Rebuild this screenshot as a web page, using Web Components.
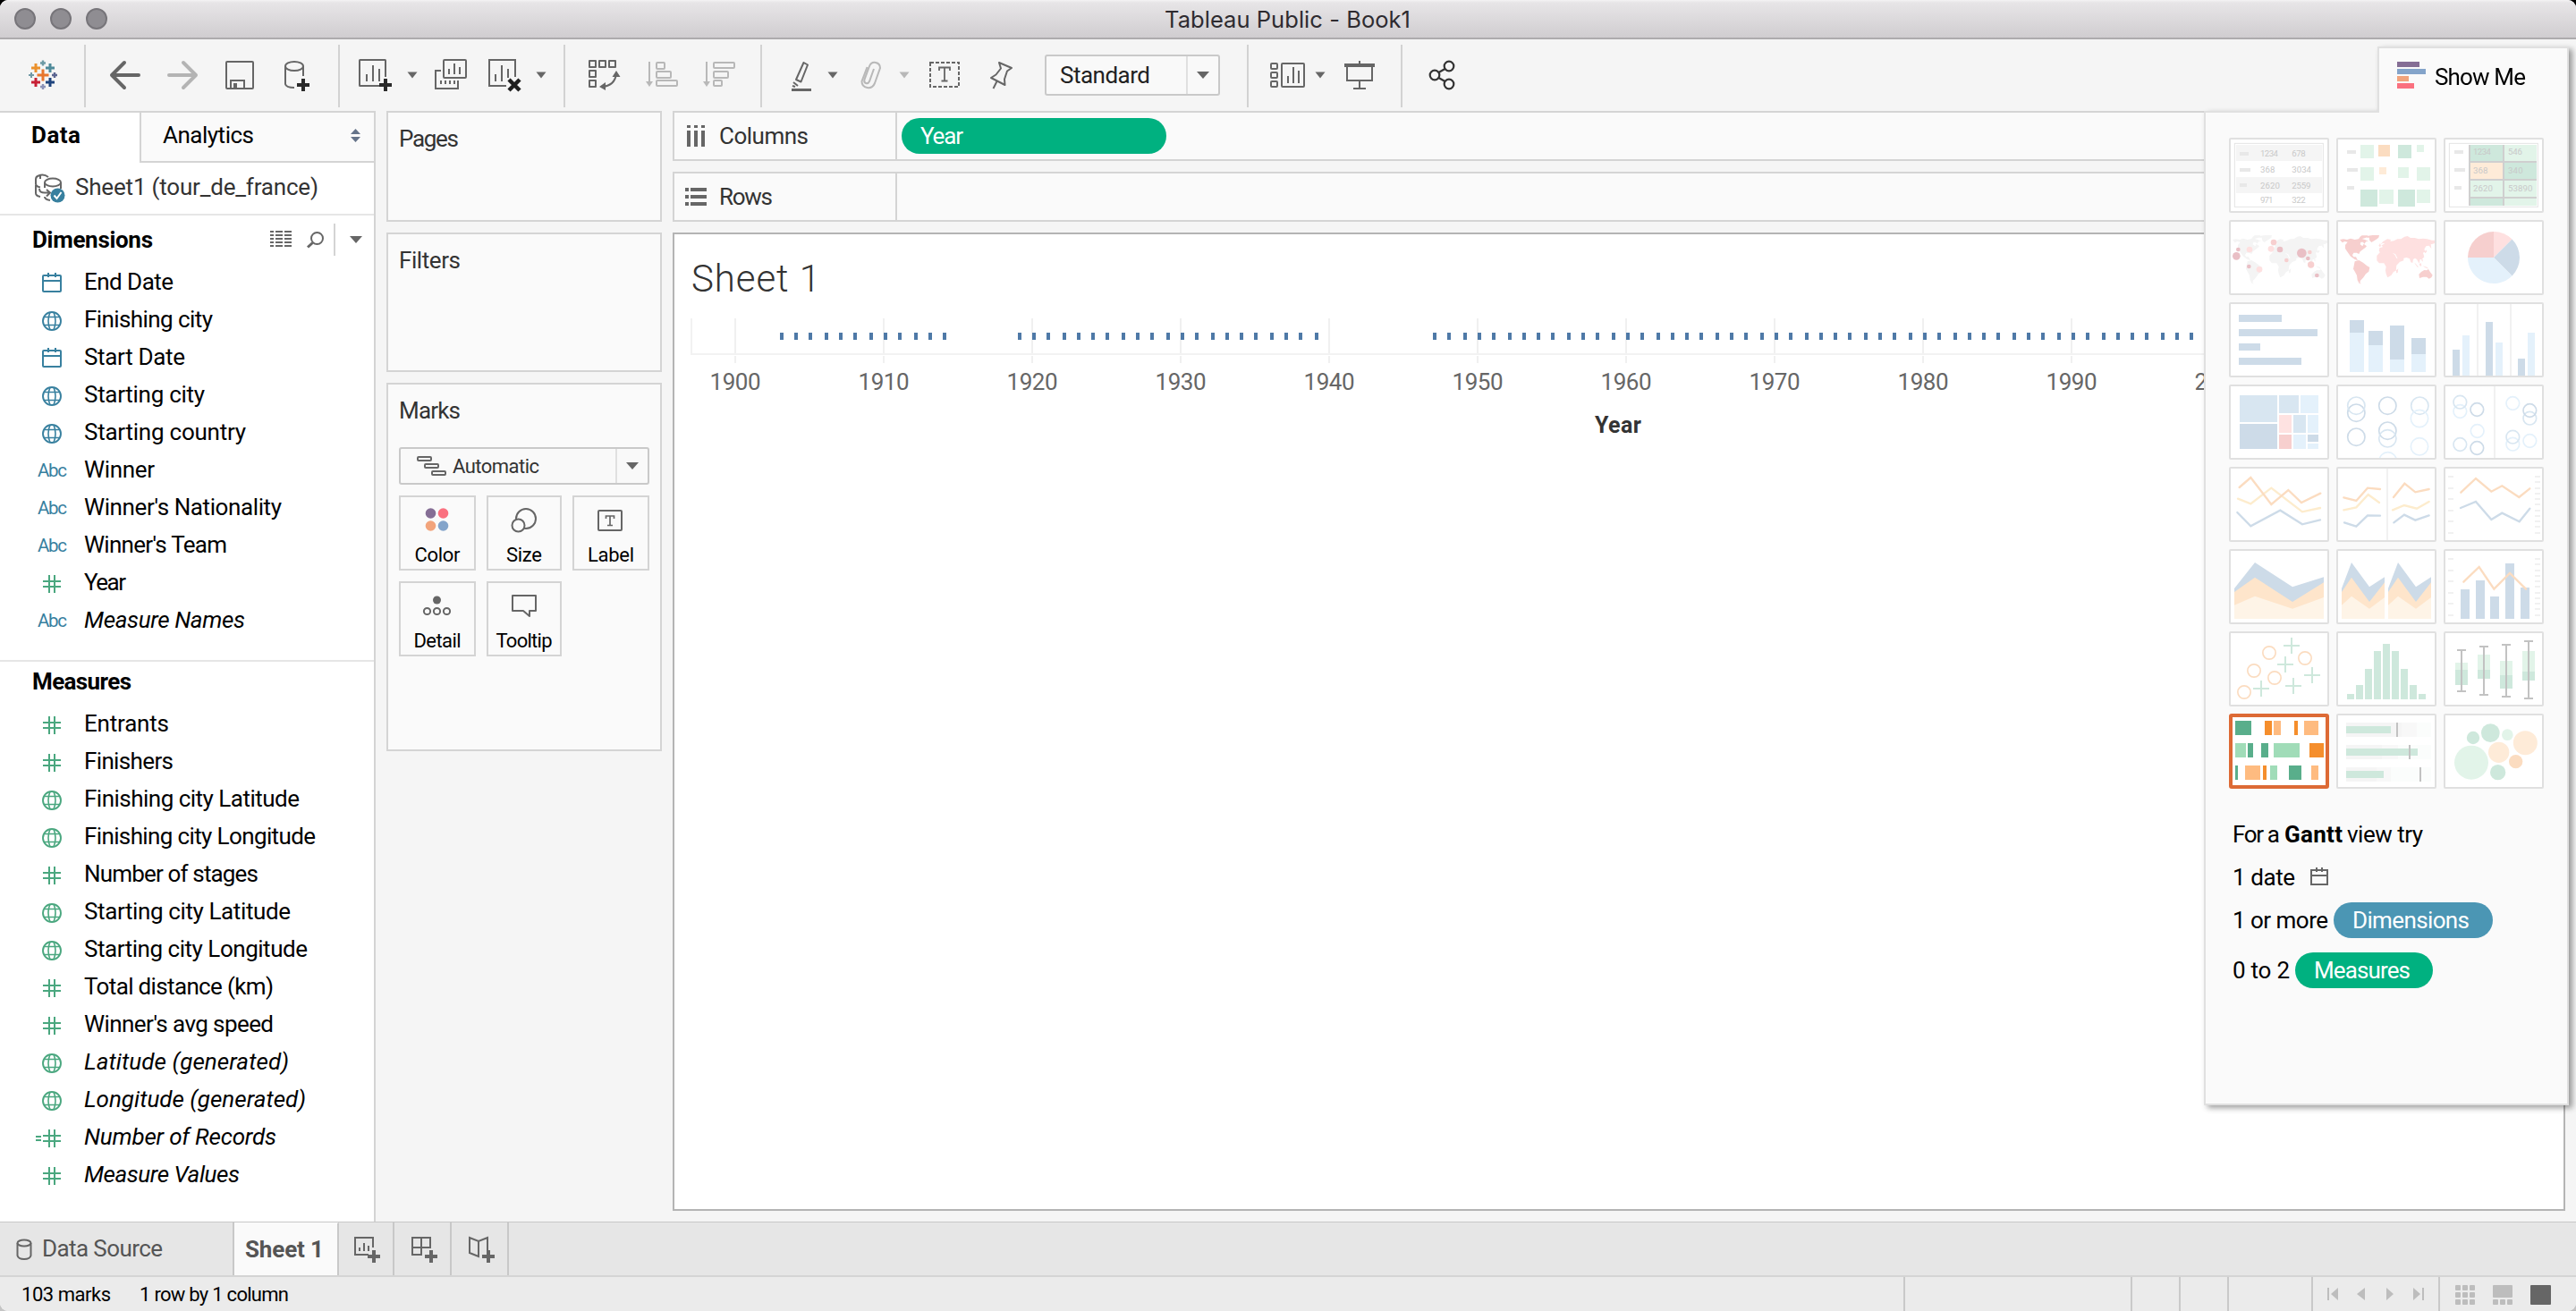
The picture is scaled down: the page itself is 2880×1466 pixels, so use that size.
<!DOCTYPE html>
<html lang="en">
<head>
<meta charset="utf-8">
<title>Tableau Public - Book1</title>
<style>
html{background:linear-gradient(#000 50%,#c4c4c4 50%)}
body{margin:0;width:2880px;height:1466px;overflow:hidden;font-family:Roboto,"Liberation Sans",sans-serif;font-size:26px;color:#000}
</style>
</head>
<body>
<workbook-window></workbook-window>
<script>
/* Inline icon: the viewBox uses the same pixel grid as the box it fills. */
const icon = (x, y, w, h, body, extra = '') =>
  `<svg width="${w}" height="${h}" viewBox="${x} ${y} ${w} ${h}" fill="none" stroke="#666" stroke-width="2" ${extra}>${body}</svg>`;
const define = (name, css, html, after) => customElements.define(name, class extends HTMLElement {
  connectedCallback() {
    if (this.shadowRoot) return;
    const root = this.attachShadow({ mode: 'open' });
    root.innerHTML = `<style>:host{display:block;box-sizing:border-box}*{box-sizing:border-box}svg{display:block;flex:none}${css}</style>` +
      (typeof html === 'function' ? html(this) : html);
    if (after) after(this, root);
  }
});

/* Text whose tracking is adjusted so that it occupies the given width. */
define('fit-text', ':host{display:inline-block;white-space:pre;flex:none}', '<span><slot></slot></span>', (el, root) => {
  const w = +el.getAttribute('w');
  if (!w) return;
  const span = root.querySelector('span');
  const n = el.textContent.length;
  const pad = 3;
  const nat = span.getBoundingClientRect().width;
  span.style.letterSpacing = ((w + pad - nat) / (n - 1)).toFixed(3) + 'px';
  el.style.width = (w + pad) + 'px';
});

define('title-bar', `
:host{height:44px;background:linear-gradient(#f4f3f4 0,#e7e5e7 3px,#d0cdd0 42px);border-bottom:2px solid #adabad;display:flex;align-items:center;flex:none;font:25.500px Inter,sans-serif;color:#2e2b30}
i{width:24px;height:24px;border-radius:50%;background:#8f8d92;border:2px solid #77757a;margin-left:16px;flex:none}
fit-text{margin-left:1182px;line-height:44px;padding-top:2px}`,
`<i></i><i></i><i></i><fit-text w="272">Tableau Public - Book1</fit-text>`);

const plus = (x, y, r, c, s = 2.6) => `<path stroke="${c}" stroke-width="${s}" d="M${x - r} ${y}h${2 * r}M${x} ${y - r}v${2 * r}"/>`;
const caret = (c = '#666') => `<svg width="12" height="10" viewBox="0 0 12 10"><path fill="${c}" d="M.5 1.500h11L6 8.500z"/></svg>`;
const T = {
  logo: [32, 32, plus(48, 84, 6.500, '#e8762c', 3) + plus(48, 70.500, 3, '#6d9aa5', 2.400) + plus(40, 76, 5, '#eb912c', 3) + plus(56, 76, 5, '#4e8a9a', 3) + plus(35, 84, 3, '#7199a6', 2) + plus(61, 84, 3, '#5b6591', 2.400) + plus(40, 92, 5, '#c72035', 3) + plus(56, 92, 5, '#1f447e', 3) + plus(48, 97, 3, '#8c93b8', 2.400)],
  back: [122, 36, '<path stroke-width="4" stroke-linecap="round" stroke-linejoin="round" d="M139 70 125 84l14 14M126 84h29"/>'],
  fwd: [186, 36, '<path stroke="#b4b4b4" stroke-width="4" stroke-linecap="round" stroke-linejoin="round" d="M205 70l14 14-14 14M218 84h-29"/>'],
  save: [252, 32, '<rect x="253" y="69" width="30" height="30" rx="1"/><path d="M258 99v-9h15v9"/><path fill="#666" stroke="none" d="M261 93h4v6h-4z"/>'],
  db: [318, 32, '<ellipse cx="329" cy="74" rx="10" ry="5"/><path d="M319 74v20q1 4 10 4M339 74v11"/><path stroke="#2a2a2a" stroke-width="4" d="M332 95h14M339 88v14"/>'],
  add: [400, 40, '<path d="M425 96h-22.500q-.5 0-.5-.5v-28q0-.5.5-.5h28q.5 0 .5.5V86M410 91v-8M417 91V73M424 91V77"/><path stroke="#2a2a2a" stroke-width="4" d="M424 95h14M431 88v14"/>'],
  dup: [485, 38, '<rect x="496" y="67" width="25" height="20" rx="1"/><path d="M502 83v-6M508 83V71M514 83V75M493 79h-6v20h25v-9M493 94v-4M498 94v-4M503 94v-4M508 94v-4"/>'],
  clear: [545, 40, '<path d="M566 96h-19v-29h29V86M554 91v-8M561 91V73M568 87V77"/><path stroke="#1e1e1e" stroke-width="4.500" d="M569 89l12 12M581 89l-12 12"/>'],
  swap: [657, 38, '<g stroke-linejoin="round"><rect x="659" y="68" width="7" height="7"/><rect x="670" y="68" width="7" height="7"/><rect x="681" y="68" width="7" height="7"/><rect x="659" y="79" width="7" height="7"/><rect x="659" y="90" width="7" height="7"/></g><path d="M673 97q14-1 16-14"/><path fill="#666" stroke="none" d="M689 79l4.500 7h-9zM670 97l7-5v9z"/>'],
  asc: [721, 38, '<g stroke="#b8b8b8"><path d="M726 69v24"/><path fill="#b8b8b8" stroke="none" d="M722 91h8l-4 6z"/><rect x="734" y="70" width="9" height="7" rx="1"/><rect x="734" y="80" width="16" height="7" rx="1"/><rect x="734" y="90" width="23" height="6" rx="1"/></g>'],
  desc: [785, 38, '<g stroke="#b8b8b8"><path d="M790 69v24"/><path fill="#b8b8b8" stroke="none" d="M786 91h8l-4 6z"/><rect x="798" y="70" width="23" height="6" rx="1"/><rect x="798" y="80" width="16" height="7" rx="1"/><rect x="798" y="90" width="9" height="6" rx="1"/></g>'],
  pen: [883, 26, '<path d="M898.500 70l4.500 2.500-7.500 19-5.500-2.500z" stroke-linejoin="round"/><path d="M887 92l5 4M886 96l3 1"/><path fill="#666" stroke="none" d="M885 99h22v3h-22z"/>'],
  clip: [960, 28, '<path stroke="#b8b8b8" d="M977 77l-5 14q-1.500 3-4 2t-1.500-4l5.500-15q2-5 7-4t5 6l-6 17q-2.500 6-8.500 5t-6-7l6-16"/>'],
  text: [1038, 36, '<rect x="1040" y="70" width="32" height="27" stroke-dasharray="4 2"/><path stroke-width="1.800" d="M1050 79v-3.500h12V79M1056 75.500v15M1052.500 90.500h7"/>'],
  pin: [1105, 28, '<path stroke-linejoin="round" d="M1117 70l14 6-5 3.500-3 9 .5 6.500-15.500-8 5.500-3.500 5.500-7z"/><path d="M1114.500 91l-4 8"/>'],
  cards: [1418, 42, '<rect x="1421" y="71" width="7" height="6" rx="1"/><rect x="1421" y="81" width="7" height="6" rx="1"/><rect x="1421" y="91" width="7" height="6" rx="1"/><rect x="1433" y="71" width="25" height="26" rx="1"/><path d="M1440 93v-8M1446 93V75M1452 93V79"/>'],
  pres: [1502, 36, '<path fill="#666" stroke="none" d="M1503 71h34v4h-34z"/><path d="M1506 75v15h28V75M1520 68v4M1520 90v9M1513 99h14"/>'],
  share: [1596, 32, '<g stroke="#333" stroke-width="2.200"><circle cx="1604" cy="84" r="5.300"/><circle cx="1620" cy="74" r="5.300"/><circle cx="1620" cy="94" r="5.300"/><path d="M1608.500 81l7-4M1608.500 87l7 4"/></g>']
};
const bar = [['logo', 32], ['|', 30], ['back', 26], ['fwd', 28], ['save', 30], ['db', 34], ['|', 28], ['add', 20], ['v', 15], ['dup', 18], ['clear', 22], ['v', 14], ['|', 19], ['swap', 25], ['asc', 26], ['desc', 26], ['|', 27], ['pen', 31], ['v', 16], ['clip', 23], ['v-', 17], ['text', 21], ['pin', 31], ['select', 35], ['|', 30], ['cards', 22], ['v', 10], ['pres', 20], ['|', 28], ['share', 28]];
define('tool-item', ':host{flex:none}i{display:block;width:2px;height:70px;background:#d2d2d2;margin-top:2px}', el => {
  const n = el.getAttribute('name');
  if (n === '|') return '<i></i>';
  if (n === 'v') return caret();
  if (n === 'v-') return caret('#b8b8b8');
  const [x, w, body] = T[n];
  return icon(x, 64, w, 40, body);
});
define('tool-bar', `
:host{height:80px;display:flex;align-items:center;flex:none;background:#f5f5f5}`,
  bar.map(([n, g]) => n === 'select'
    ? `<drop-down style="margin-left:${g}px;width:196px;height:46px;--arrow:36px"><fit-text w="98" style="margin-left:15px;color:#222">Standard</fit-text></drop-down>`
    : `<tool-item name="${n}" style="margin-left:${g}px"></tool-item>`).join(''));
define('drop-down', `
:host{display:flex;align-items:center;border:2px solid #c9c9c9;border-radius:3px;background:#f9f9f9;flex:none}
.b{height:100%;width:var(--arrow);margin-left:auto;border-left:2px solid #e0e0e0;display:flex;align-items:center;justify-content:center}`,
`<slot></slot><div class="b"><svg width="14" height="8" viewBox="0 0 14 8"><path fill="#666" d="M0 0h14L7 8z"/></svg></div>`);

/* ---- Data pane ---- */
const glyph = {
  cal: c => `<g stroke="${c}"><rect x="48" y="-7" width="20" height="18" rx="1"/><path d="M48 -1h20M54 -10v5M62 -10v5"/></g>`,
  globe: c => `<g stroke="${c}" stroke-width="1.900"><circle cx="58" cy="2" r="10"/><path stroke-width="1.600" d="M49.500 -2.500h17M49.500 6.500h17M56 -8q-4 10 0 20M60 -8q4 10 0 20"/></g>`,
  hash: c => `<path stroke="${c}" d="M55 -8v20M61 -8v20M48 -1h20M48 5h20"/>`,
  eq: c => `<path stroke="${c}" d="M55 -8v20M61 -8v20M48 -1h20M48 5h20M40 0h6M40 4h6"/>`
};
define('field-row', `
:host{display:flex;height:42px;align-items:center;padding-left:40px;line-height:42px}
.i{width:54px;flex:none}
.abc{font-size:20.500px;padding-left:2px;padding-top:2px;color:#38809f}
:host([calc]) .n{font-style:italic}`, el => {
  const k = el.getAttribute('kind'), c = el.getAttribute('tone') === 'm' ? '#4aa77f' : '#38809f';
  return `<div class="i">${k === 'abc' ? '<div class="abc"><fit-text w="30">Abc</fit-text></div>' : icon(40, -14, 32, 28, glyph[k](c))}</div><fit-text class="n" w="${el.getAttribute('w')}">${el.getAttribute('label')}</fit-text>`;
});
const rows = list => list.map(([k, tone, label, w, calc]) => `<field-row kind="${k}" tone="${tone}" w="${w}" label="${label}" ${calc ? 'calc' : ''}></field-row>`).join('');
define('data-pane', `
:host{width:420px;flex:none;background:#fff;border-top:2px solid #d4d4d4;border-right:2px solid #d4d4d4}
.tabs{display:flex;height:56px}
.data{width:156px;padding-left:35px;font-weight:700;line-height:50px}
.an{flex:1;background:#fafafa;border-left:2px solid #d4d4d4;border-bottom:2px solid #d4d4d4;display:flex;line-height:50px;padding-left:24px}
.an svg{margin:18px 15px 0 auto}
.src{height:59px;border-bottom:2px solid #e6e6e6;display:flex;align-items:center;padding-left:38px;color:#333}
.src svg{margin-right:8px}
.src fit-text{line-height:54px;height:57px}
.h{height:53px;display:flex;align-items:center;padding-left:36px;font-weight:700}
.d{width:2px;height:36px;background:#d4d4d4;margin:0 16px 0 11px}
.m{height:48px;border-top:0;line-height:44px;padding-left:36px;font-weight:700}
.sep{height:26px;border-bottom:2px solid #e6e6e6}`,
`<div class="tabs"><div class="data"><fit-text w="52">Data</fit-text></div><div class="an"><fit-text w="99">Analytics</fit-text><svg width="11" height="15" viewBox="0 0 11 15" fill="#66748a"><path d="M0 6h11L5.500 0zM0 9h11L5.500 15z"/></svg></div></div>
<div class="src">${icon(38, 192, 38, 38, '<path d="M54 198q-5-4-11-1.500-3 1-3 4v5q0 3 5 4M40 207v9q0 3 5 4M45 200v-4"/><ellipse cx="59" cy="204" rx="9" ry="4.500"/><path d="M50 204v6M68 204v7M44 211q0 5 7 4.500h4M52 212l4 3.500-4 4M50 220q0 3 6 4"/><circle cx="64.500" cy="218.500" r="8" fill="#38809f" stroke="none"/><path stroke="#fff" d="M60.500 218.500l3 3.500 5-7"/>')}<fit-text w="269">Sheet1 (tour_de_france)</fit-text></div>
<div class="h"><fit-text w="132">Dimensions</fit-text><div style="display:flex;margin-left:auto;align-items:center">${icon(302, 258, 24, 19, '<path d="M302 259h24M302 263h24M302 267h24M302 271h24M302 275h24" stroke-dasharray="4 2 8 2 8 0"/>')}${icon(342, 258, 20, 20, '<circle cx="354.500" cy="266.500" r="6.500"/><path stroke-width="3" d="M349.500 271.500L344 276.500"/>', 'style="margin-left:16px"')}<div class="d"></div><svg width="14" height="8" viewBox="0 0 14 8" style="margin-right:13px"><path fill="#666" d="M0 0h14L7 8z"/></svg></div></div>
${rows([['cal', 'd', 'End Date', 97], ['globe', 'd', 'Finishing city', 141], ['cal', 'd', 'Start Date', 110], ['globe', 'd', 'Starting city', 132], ['globe', 'd', 'Starting country', 178], ['abc', 'd', 'Winner', 76], ['abc', 'd', "Winner's Nationality", 218], ['abc', 'd', "Winner's Team", 157], ['hash', 'm', 'Year', 44], ['abc', 'd', 'Measure Names', 177, 1]])}
<div class="sep"></div><div class="m"><fit-text w="108">Measures</fit-text></div>
${rows([['hash', 'm', 'Entrants', 92], ['hash', 'm', 'Finishers', 97], ['globe', 'm', 'Finishing city Latitude', 238], ['globe', 'm', 'Finishing city Longitude', 256], ['hash', 'm', 'Number of stages', 192], ['globe', 'm', 'Starting city Latitude', 228], ['globe', 'm', 'Starting city Longitude', 247], ['hash', 'm', 'Total distance (km)', 209], ['hash', 'm', "Winner's avg speed", 209], ['globe', 'm', 'Latitude (generated)', 226, 1], ['globe', 'm', 'Longitude (generated)', 245, 1], ['eq', 'm', 'Number of Records', 212, 1], ['hash', 'm', 'Measure Values', 171, 1]])}`);

/* ---- Cards ---- */
define('side-card', `:host{background:#fafafa;border:2px solid #d4d4d4;flex:none;color:#333;padding:8px 12px 0 12px}fit-text{line-height:42px;display:block}`,
  el => `<fit-text w="${el.getAttribute('w')}">${el.getAttribute('label')}</fit-text><slot></slot>`);
define('mark-button', `:host{border:2px solid #d4d4d4;height:84px;display:flex;flex-direction:column;align-items:center;background:#fafafa;color:#000;font-size:22px}fit-text{line-height:28px}::slotted(svg){display:block;margin:6px 0 9px}`,
  el => `<slot></slot><fit-text w="${el.getAttribute('w')}">${el.getAttribute('label')}</fit-text>`);
define('card-column', `
:host{width:308px;flex:none;margin-left:12px;display:flex;flex-direction:column;gap:12px}
.g{display:grid;grid-template-columns:86px 84px 86px;gap:12px;margin-top:12px}
drop-down{height:42px;margin-top:20px;--arrow:36px;font-size:22px}`,
`<side-card label="Pages" w="64" style="height:124px"></side-card><side-card label="Filters" w="66" style="height:156px"></side-card>
<side-card label="Marks" w="66" style="height:412px"><drop-down>${icon(466, 508, 34, 24, '<rect x="467" y="510" width="15" height="4" rx="1"/><rect x="475" y="518" width="15" height="4" rx="1"/><rect x="483" y="526" width="15" height="4" rx="1"/>', 'style="margin-left:18px;margin-right:6px"')}<fit-text w="94">Automatic</fit-text></drop-down>
<div class="g"><mark-button label="Color" w="48">${icon(466, 562, 44, 36, '<g stroke="none"><circle cx="480.500" cy="574" r="5.800" fill="#856e95"/><circle cx="494.500" cy="574" r="5.800" fill="#fa707f"/><circle cx="480.500" cy="588" r="5.800" fill="#f2a47c"/><circle cx="494.500" cy="588" r="5.800" fill="#84a4ca"/></g>')}</mark-button>
<mark-button label="Size" w="37">${icon(564, 562, 44, 36, '<circle cx="588" cy="580" r="11"/><circle cx="579.500" cy="587.500" r="7" fill="#fafafa"/>')}</mark-button>
<mark-button label="Label" w="49">${icon(661, 562, 44, 36, '<rect x="669" y="571" width="26" height="22" rx="1"/><path stroke-width="1.700" d="M677.500 580v-3h9v3M682 577v10.500M679 587.500h6"/>')}</mark-button>
<mark-button label="Detail" w="50">${icon(466, 658, 44, 36, '<circle cx="487.500" cy="671" r="4.500" fill="#666" stroke="none"/><circle cx="476.500" cy="683.500" r="3.600"/><circle cx="487.500" cy="683.500" r="3.600"/><circle cx="498.500" cy="683.500" r="3.600"/>')}</mark-button>
<mark-button label="Tooltip" w="60">${icon(564, 658, 44, 36, '<path stroke-linejoin="round" d="M573 666h26v17h-7v6l-7-6h-12z"/>')}</mark-button></div></side-card>`);

/* ---- Shelves and view ---- */
define('shelf-bar', `
:host{height:56px;flex:none;border:2px solid #d4d4d4;background:#fafafa;display:flex;align-items:center;color:#333}
.l{width:249px;height:100%;border-right:2px solid #d4d4d4;display:flex;align-items:center;padding-left:12px}
.l fit-text{margin-left:14px;padding-bottom:1px}`,
  el => `<div class="l">${el.getAttribute('label') === 'Columns'
    ? icon(766, 138, 24, 24, '<path stroke-width="4" d="M770 138v3M778 138v3M786 138v3M770 144v18M778 144v18M786 144v18"/>')
    : icon(766, 206, 24, 24, '<path stroke-width="4" d="M766 210h4M772 210h18M766 218h4M772 218h18M766 226h4M772 226h18"/>')}<fit-text w="${el.getAttribute('w')}">${el.getAttribute('label')}</fit-text></div><slot></slot>`);
define('field-pill', ':host{display:flex;align-items:center;height:40px;border-radius:20px;background:var(--pill,#00b180);color:#fff;flex:none}fit-text{margin-left:21px;padding-bottom:1px}',
  el => `<fit-text w="${el.getAttribute('w')}">${el.getAttribute('label')}</fit-text>`);
define('sheet-view', `
:host{background:#fff;border:2px solid #b4b4b4;flex:1;overflow:hidden;padding-top:20px}
.t{font-size:42px;font-weight:300;color:#333;margin-left:19px;line-height:60px;height:58px}
svg{overflow:visible;margin-left:10px}`, () => {
  const X = y => 822 + (y - 1900) * 16.600;
  let s = '<path stroke="#f2f2f2" d="M773 356v40M772 396h2088"/>';
  for (let y = 1900; y <= 2020; y += 10) {
    s += `<path stroke="#f0f0f0" d="M${Math.round(X(y))} 356v39M${Math.round(X(y))} 398v8"/><text x="${X(y)}" y="436" textLength="57" text-anchor="middle">${y}</text>`;
  }
  for (let y = 1903; y <= 2016; y++) {
    if ((y > 1914 && y < 1919) || (y > 1939 && y < 1947)) continue;
    s += `<rect x="${2 * Math.round((821.900 + (y - 1900) * 16.600) / 2)}" y="372" width="4" height="8" fill="#4e79a7" stroke="none"/>`;
  }
  return `<div class="t"><fit-text w="141">Sheet 1</fit-text></div>` +
    icon(764, 340, 2090, 160, `<g fill="none">${s.replace(/<text/g, '<text fill="#666" stroke="none" font-size="26"')}</g><text x="1809" y="484" fill="#333" stroke="none" font-size="25" font-weight="700" text-anchor="middle" textLength="52">Year</text>`);
});
define('view-column', ':host{flex:1;margin:0 12px 0 12px;display:flex;flex-direction:column;gap:12px;height:1230px}',
`<shelf-bar label="Columns" w="97"><field-pill label="Year" w="45" style="width:296px;margin-left:5px"></field-pill></shelf-bar><shelf-bar label="Rows" w="57"></shelf-bar><sheet-view></sheet-view>`);

/* ---- Show Me ---- */
const R = (c, ...list) => `<g fill="${c}">` + list.map(([x, y, x2, y2]) => `<rect x="${x}" y="${y}" width="${x2 - x}" height="${y2 - y}"/>`).join('') + '</g>';
const C = (c, ...list) => `<g fill="${c}">` + list.map(([x, y, r]) => `<circle cx="${x}" cy="${y}" r="${r}"/>`).join('') + '</g>';
const O = (c, r, ...list) => `<g fill="none" stroke="${c}" stroke-width="5">` + list.map(([x, y]) => `<circle cx="${x}" cy="${y}" r="${r}"/>`).join('') + '</g>';
const L = (c, d, w = 7) => `<path fill="none" stroke="${c}" stroke-width="${w}" stroke-linecap="round" stroke-linejoin="miter" d="${d}"/>`;
const P = (c, d) => `<path fill="${c}" d="${d}"/>`;
const N = (...list) => `<g font-size="29" fill="#c9c9c9">` + list.map(([x, y, t, w]) => `<text x="${x}" y="${y}" textLength="${w}">${t}</text>`).join('') + '</g>';
const B = '#cddbe8', LB = '#e4f1fb', MB = '#d8e6f1', G = '#cee8dc', LG = '#e2f4e9', OR = '#fbdcc0', LO = '#feebd8', K = '#c2c2c2', F = '#f1f1f1';
const americas = 'M528 684l12-2 12 2 12-4 14 4 12-2 8-8 6 8 8 2 12 6-8 0-6 8-4-6-8 0-2 8 8 6 4-8 10 8-4 4-8 6-10 8-4 8-8-4-10 0-4 8 4 6 8 0 6 12-10-4-14-10-10-14-8-12 0-12 8-10-10-2-8 4zM602 670l20 0-8 8-14 4-6-6zM618 672l20-3 22 0-2 8-8 6-16 10-6-6-2-10-10 0zM578 757l14-4 14 8 12 10 10 6-3 14-10 8-8 12-10 10-2 8 6 3-8-1-6-11-2-16-5-10-7-12zM793 800l8-8 10-6 8 1 6-4 6 10 8 10-4 8-8 4-8-6-12 0-12 4z';
const oldworld = 'M652 738l10-11 18-4 4 6 18-1 10 6 6 12 14 4-4 10-10 10-2 18-8 4-8 12-12 7-5-12-2-12 2-12-7-12-16 0-8-9zM717 787l7-6-2 14-5 1zM659 722l2-10 12-4-6-4 12-8-8 0-8 6 10-12 14-8 12 2-2 6 12-2 12-6 12 0 12-8 10-2 10 6 14 0 14 4 14-2 14 2 16 4 10 0 0 10-14 4 2 14-8-10-10 2-6 10 4 8-8 4 4 14-8 8-6 0-3 14-8-14-6-4-6 4-2 12-6-2-4-12-10-4-10 2 0 8-12 4-8-10-8-16-8-2 2 6-12-2-10-4-10 0-6 4zM658 704l5-8 3 8-3 5zM778 762l4 2 10 12-4 0zM794 766l6-4 2 8-4 4zM806 772l14 4 6 6-12-4zM802 748l4 2 0 8-4-4zM812 726l6-8 2 6-6 6z';
const ticks = y0 => [0, 39, 75, 114, 150, 189].map(d => `M891 ${y0 + d}h18`).join('') + [0, 18, 39, 57, 75, 93, 114, 132, 150, 168, 189].map(d => `M1182 ${y0 + d}h18`).join('');
const th = [
  [156, 342, `<rect x="175" y="361" width="297" height="213" fill="none" stroke="#e4e4e4" stroke-width="3"/>` + R('#f5f5f5', [180, 366, 468, 420], [180, 474, 468, 528]) + R('#e8e8e8', [192, 390, 222, 402], [192, 444, 228, 456], [192, 495, 216, 507]) + N([261, 404, '1234', 60], [367, 404, '678', 46], [261, 458, '368', 49], [367, 458, '3034', 65], [261, 512, '2620', 66], [367, 512, '2559', 63], [261, 560, '971', 43], [367, 560, '322', 46])],
  [516, 342, R('#e8e8e8', [552, 384, 582, 396], [552, 444, 588, 456], [552, 504, 576, 516]) + R(LG, [597, 366, 642, 411], [786, 366, 810, 390], [597, 441, 642, 486], [723, 441, 759, 477], [786, 441, 831, 486], [660, 516, 708, 564], [786, 516, 831, 561]) + R(G, [723, 366, 768, 411], [597, 516, 654, 573], [723, 516, 780, 573]) + R(OR, [657, 366, 696, 405]) + R(LO, [660, 441, 684, 465])],
  [876, 342, `<rect x="895" y="361" width="297" height="213" fill="none" stroke="#e4e4e4" stroke-width="3"/>` + R('#e8e8e8', [912, 384, 942, 396], [912, 444, 948, 456], [912, 504, 936, 516]) + R('#cfcfcf', [960, 366, 1188, 570]) + R(G, [966, 366, 1074, 420], [1080, 426, 1188, 480], [966, 546, 1074, 570]) + R(LG, [1080, 366, 1188, 420], [966, 486, 1074, 540], [1080, 486, 1188, 540], [1080, 546, 1188, 570]) + R(LO, [966, 426, 1074, 480]) + N([975, 399, '1234', 60], [1092, 399, '546', 48], [975, 462, '368', 49], [1092, 462, '340', 50], [975, 522, '2620', 66], [1092, 522, '53890', 82])],
  [156, 618, `<g transform="translate(-360 0)">${P('#f4f4f4', americas) + P('#f4f4f4', oldworld)}</g>` + C('#e9bfc5', [181, 739, 13], [187, 717, 7], [327, 717, 10], [400, 729, 16], [421, 747, 7], [223, 774, 7], [451, 804, 7]) + C('#f7cfcf', [306, 693, 10], [349, 753, 7], [427, 726, 7], [431, 768, 11]) + C('#fee0e0', [225, 717, 10], [297, 715, 10], [258, 784, 10])],
  [516, 618, P('#f7cfce', americas) + P('#fee0e0', oldworld)],
  [876, 618, P('#f6cfce', 'M1044 744H957A87 87 0 0 1 1044 657z') + P('#fee0e0', 'M1044 744V657A87 87 0 0 1 1105.500 682.500z') + P(B, 'M1044 744L1105.500 682.500A87 87 0 0 1 1105.500 805.500z') + P(LB, 'M1044 744L1105.500 805.500A87 87 0 0 1 957 744z')],
  [156, 894, R(B, [189, 936, 333, 960], [189, 984, 453, 1008], [189, 1032, 261, 1056], [189, 1080, 399, 1104])],
  [516, 894, R(LB, [561, 996, 609, 1128], [624, 1038, 672, 1128], [696, 1086, 744, 1128], [768, 1068, 816, 1128]) + R(B, [561, 954, 609, 996], [624, 990, 672, 1038], [696, 972, 744, 1086], [768, 1014, 816, 1068])],
  [876, 894, R(F, [987, 900, 993, 1140], [1098, 900, 1104, 1140]) + R(B, [906, 1053, 930, 1140], [1017, 960, 1041, 1140], [1125, 1083, 1149, 1140]) + R(LB, [939, 1005, 963, 1140], [1050, 1029, 1074, 1140], [1158, 996, 1182, 1140])],
  [156, 30, R(MB, [192, 66, 318, 156], [324, 66, 390, 126], [372, 132, 414, 192]) + R(B, [192, 162, 318, 246], [420, 198, 456, 222]) + R(LB, [396, 66, 456, 126], [420, 132, 456, 192], [372, 198, 414, 246], [420, 228, 456, 246]) + R('#fee2e1', [324, 132, 366, 192]) + R('#f7cfce', [324, 198, 366, 246])],
  [516, 30, O(B, 29, [583, 125], [583, 206], [688, 101], [688, 185]) + O(MB, 29, [583, 101], [688, 211], [796, 101]) + O(LB, 29, [795, 144], [795, 238], [689, 286])],
  [876, 30, R(F, [1044, 36, 1050, 276]) + O(LB, 22, [931, 120], [989, 186], [1108, 93], [1108, 230], [1165, 219]) + O(MB, 22, [931, 89], [931, 231], [1165, 143], [1108, 206]) + O(B, 22, [988, 114], [988, 243], [1165, 117])],
  [156, 306, L('#fdeccd', 'M186 413L229 430 298 377 402 457 462 444') + L(OR, 'M191 375L229 342 298 432 355 384 399 426 463 395') + L(B, 'M184 459L229 505 328 452 402 499 462 484')],
  [516, 306, R(F, [684, 312, 690, 552]) + L('#fdeccd', 'M541 451L583 442 623 399 660 426M705 451L744 435 786 446 827 423') + L(OR, 'M541 409L583 420 621 377 663 381M708 408L745 362 781 391 827 381') + L(B, 'M543 493L583 506 621 469 663 470M709 493L744 467 781 485 827 469')],
  [876, 306, L(F, ticks(339), 6).replace('round', 'butt') + L(OR, 'M934 392L984 345 1036 389 1072 370 1129 408 1165 379') + L(B, 'M933 444L984 423 1036 483 1072 461 1130 490 1165 446')],
  [156, 582, P(B, 'M174 714L243 627 369 709 474 676V816H174z') + P('#fee5cb', 'M174 726L243 677 369 759 474 694V816H174z') + P('#fef4e7', 'M174 770L243 740 369 782 474 744V816H174z')],
  [516, 582, [534, 690].map(x => `<g transform="translate(${x} 0)">${P(B, 'M0 714L33 627 93 709 144 676V816H0z') + P('#fee5cb', 'M0 726L33 677 93 759 144 694V816H0z') + P('#fef4e7', 'M0 770L33 740 93 782 144 744V816H0z')}</g>`).join('')],
  [876, 582, L(F, ticks(615), 6).replace('round', 'butt') + R(B, [933, 717, 963, 816], [984, 687, 1014, 816], [1032, 741, 1062, 816], [1083, 630, 1113, 816], [1134, 711, 1164, 816]) + L(OR, 'M943 692L995 642 1045 716 1098 663 1152 716')],
  [156, 108, O(OR, 21.500, [291, 180], [411, 198], [240, 240], [309, 264], [207, 312]) + [[366, 156], [345, 219], [435, 255], [264, 300], [372, 291]].map(([x, y]) => plus(x, y, 27, G, 6)).join('')],
  [516, 108, R(G, [552, 318, 576, 336], [582, 288, 606, 336], [612, 234, 636, 336], [642, 174, 666, 336], [672, 150, 696, 336], [702, 174, 726, 336], [732, 234, 756, 336], [762, 288, 786, 336], [792, 318, 816, 336])],
  [876, 108, R(LG, [915, 213, 957, 237], [990, 186, 1032, 237], [1065, 207, 1107, 255], [1140, 174, 1182, 243]) + R(G, [915, 237, 957, 288], [990, 237, 1032, 267], [1065, 255, 1107, 300], [1140, 243, 1182, 273]) + `<path stroke="${K}" stroke-width="6" d="M936 171v138M921 171h30M921 309h30M1011 159v162M996 159h30M996 321h30M1086 153v174M1071 153h30M1071 327h30M1161 141v192M1146 141h30M1146 333h30"/>`],
  [156, 384, R('#59ae8b', [177, 408, 231, 456], [219, 483, 237, 531], [264, 483, 288, 531], [177, 558, 186, 606], [357, 558, 399, 606]) + R('#a0dcb8', [177, 483, 213, 531], [306, 483, 393, 531], [294, 558, 318, 606]) + R('#f58e2c', [276, 408, 300, 456], [375, 408, 387, 456], [426, 483, 474, 531], [270, 558, 282, 606]) + R('#febb80', [306, 408, 330, 456], [408, 408, 456, 456], [210, 558, 261, 606], [432, 558, 456, 606]), 'sel'],
  [516, 384, R('#fbfdfc', [549, 414, 834, 462], [549, 489, 834, 537], [549, 564, 834, 612]) + R('#f8f8f8', [549, 414, 786, 462], [549, 489, 723, 537], [549, 564, 699, 612]) + R('#f5f5f5', [549, 414, 735, 462], [549, 489, 669, 537], [549, 564, 651, 612]) + R(G, [549, 426, 699, 450], [549, 501, 789, 525], [549, 576, 675, 600]) + R(K, [717, 414, 723, 462], [759, 489, 765, 537], [795, 564, 801, 612])],
  [876, 384, C(LG, [969, 548, 57], [1090, 455, 19]) + C(G, [975, 465, 21.500], [1033, 449, 31], [1058, 581, 26]) + C(LO, [1061, 514, 35], [1150, 482, 40.500]) + C(OR, [1118, 545, 23])]
];
define('chart-thumb', `
:host{width:112px;height:84px;background:#fff;border:2px solid #e0e0e0;border-radius:2px}
:host([sel]){border:4px solid #dd6a35;border-radius:3px}
:host([sel]) svg{margin:-2px}`, el => {
  const [x, y, body] = th[+el.getAttribute('index')];
  return `<svg width="108" height="80" viewBox="${x + 6} ${y + 6} 324 240">${body}</svg>`;
});
define('show-me', `
:host{position:absolute;left:2464px;top:52px;width:408px;height:1184px;display:flex;flex-direction:column;filter:drop-shadow(4px 3px 3px rgba(0,0,0,.38))}
.tab{align-self:flex-end;width:214px;height:74px;margin-bottom:-2px;z-index:1;background:#fafafa;border:2px solid #e0e0e0;border-bottom:0;display:flex;align-items:flex-start;padding:15px 0 0 20px}
.tab svg{margin:-1px 10px 0 0}.tab fit-text{line-height:34px}
.body{flex:1;background:#fafafa;border:2px solid #e0e0e0;padding:28px 26px 0}
.grid{display:grid;grid-template-columns:repeat(3,112px);gap:8px}
.r{display:flex;align-items:center;padding-left:4px}`,
`<div class="tab">${icon(2680, 68, 32, 32, '<g stroke="none"><path fill="#856e95" d="M2680 69h25v6h-25z"/><path fill="#84a4ca" d="M2680 77h32v6h-32z"/><path fill="#f2a47c" d="M2680 85h13v6h-13z"/><path fill="#fa707f" d="M2680 93h19v6h-19z"/></g>')}<fit-text w="99">Show Me</fit-text></div>
<div class="body"><div class="grid">${th.map((t, i) => `<chart-thumb index="${i}" ${t[3] || ''}></chart-thumb>`).join('')}</div>
<div class="r" style="margin-top:30px;height:42px"><fit-text w="50">For a</fit-text><fit-text w="62" style="font-weight:700;margin-left:5px">Gantt</fit-text><fit-text w="82" style="margin-left:5px">view try</fit-text></div>
<div class="r" style="height:54px"><fit-text w="67">1 date</fit-text>${icon(2582, 969, 22, 22, '<rect x="2584" y="973" width="18" height="16"/><path d="M2584 979h18M2590 970v5M2596 970v5"/>', 'style="margin-left:16px;margin-bottom:2px"')}</div>
<div class="r" style="height:42px"><fit-text w="104">1 or more</fit-text><field-pill label="Dimensions" w="128" style="--pill:#4b96b4;width:178px;margin-left:6px"></field-pill></div>
<div class="r" style="margin-top:14px;height:42px"><fit-text w="61">0 to 2</fit-text><field-pill label="Measures" w="105" style="width:154px;margin-left:6px"></field-pill></div></div>`);

/* ---- Bottom bars ---- */
const addPlus = (x, y) => `<path stroke-width="4" d="M${x - 7} ${y}h14M${x} ${y - 7}v14"/>`;
define('sheet-tabs', `
:host{height:60px;flex:none;border-top:1px solid #c8c8c8;background:#e6e6e6;display:flex;color:#555;line-height:57px}
div{border-right:2px solid #c8c8c8;display:flex;align-items:center;height:59px}
.s{background:#fafafa;border-top:1px solid #fafafa;width:117px;padding-left:12px;font-weight:700}
.a{width:64px;padding-left:18px}`,
`<div style="width:262px;padding-left:18px">${icon(19, 1383, 20, 26, '<ellipse cx="28" cy="1389" rx="7.500" ry="3.500"/><path d="M20.500 1389v14q1 4 7.500 4t7.500-4v-14"/>')}<fit-text w="132" style="margin-left:9px">Data Source</fit-text></div>
<div class="s"><fit-text w="85">Sheet 1</fit-text></div>
<div class="a" style="width:62px;padding-left:16px">${icon(395, 1382, 32, 32, '<path d="M412 1404h-15v-19h20v11M402 1400v-4M407 1400v-9M412 1400v-6"/>' + addPlus(418, 1406))}</div>
<div class="a">${icon(459, 1382, 32, 32, '<path d="M471 1385v19h-10v-19h20v11h-20"/>' + addPlus(482, 1406))}</div>
<div class="a">${icon(523, 1382, 32, 32, '<path d="M535 1389v17l-10-4v-17l10 4 10-4v14"/>' + addPlus(546, 1406))}</div>`);
const nav = '#bdbdbd';
define('status-bar', `
:host{height:40px;flex:none;border-top:2px solid #d4d4d4;background:#ebebeb;display:flex;align-items:center;font-size:22px}
i{width:2px;height:38px;background:#c9c9c9;flex:none}`,
`<fit-text w="97" style="margin-left:24px">103 marks</fit-text><fit-text w="164" style="margin-left:32px">1 row by 1 column</fit-text>
<i style="margin-left:auto"></i><i style="margin-left:252px"></i><i style="margin-left:52px"></i><i style="margin-left:52px"></i><i style="margin-left:92px"></i>
${icon(2586, 1428, 140, 38, `<g stroke="none" fill="${nav}"><path d="M2602 1440h2v14h-2zM2614 1440v14l-8-7zM2644 1440v14l-9-7zM2668 1440v14l8-7zM2698 1440v14l8-7zM2708 1440h2v14h-2z"/></g>`)}
<i></i>${icon(2728, 1428, 152, 38, '<g stroke="none" fill="#bdbdbd">' + [0, 8, 16].map(dx => [0, 8, 16].map(dy => `<rect x="${2745 + dx}" y="${1437 + dy}" width="6" height="6" rx="1"/>`).join('') + `<rect x="${2787 + dx}" y="1453" width="6" height="6" rx="1"/>`).join('') + '<rect x="2787" y="1437" width="22" height="14" rx="1"/><rect x="2829" y="1437" width="23" height="22" rx="1" fill="#666"/></g>')}`);

define('workbook-window', `
:host{position:relative;width:2880px;height:1466px;display:flex;flex-direction:column;background:#f5f5f5;border-radius:9px;overflow:hidden}
.w{height:1242px;display:flex;flex:none}`,
`<title-bar></title-bar><tool-bar></tool-bar><div class="w"><data-pane></data-pane><card-column></card-column><view-column></view-column></div><sheet-tabs></sheet-tabs><status-bar></status-bar><show-me></show-me>`);
</script>
</body>
</html>
